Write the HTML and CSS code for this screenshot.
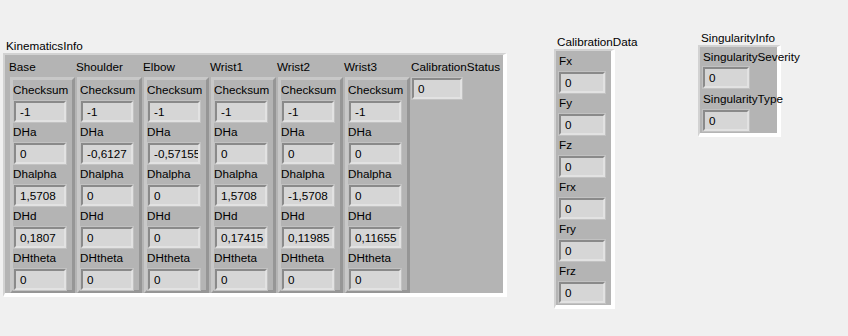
FILE: index.html
```html
<!DOCTYPE html>
<html lang="en">
<head>
    <meta charset="UTF-8">
    <title>Front Panel</title>
    <link rel="stylesheet" href="styles.css">
</head>
<body>
    <div class="panel">
        <!-- KinematicsInfo -->
        <div class="control kinematics">
            <div class="caption">KinematicsInfo</div>
            <div class="cluster outer">
                <div class="column">
                    <div class="col-label">Base</div>
                    <div class="cluster inner">
                        <div class="field"><div class="flabel">Checksum</div><div class="num">-1</div></div>
                        <div class="field"><div class="flabel">DHa</div><div class="num">0</div></div>
                        <div class="field"><div class="flabel">Dhalpha</div><div class="num">1,5708</div></div>
                        <div class="field"><div class="flabel">DHd</div><div class="num">0,1807</div></div>
                        <div class="field"><div class="flabel">DHtheta</div><div class="num">0</div></div>
                    </div>
                </div>
                <div class="column">
                    <div class="col-label">Shoulder</div>
                    <div class="cluster inner">
                        <div class="field"><div class="flabel">Checksum</div><div class="num">-1</div></div>
                        <div class="field"><div class="flabel">DHa</div><div class="num">-0,6127</div></div>
                        <div class="field"><div class="flabel">Dhalpha</div><div class="num">0</div></div>
                        <div class="field"><div class="flabel">DHd</div><div class="num">0</div></div>
                        <div class="field"><div class="flabel">DHtheta</div><div class="num">0</div></div>
                    </div>
                </div>
                <div class="column">
                    <div class="col-label">Elbow</div>
                    <div class="cluster inner">
                        <div class="field"><div class="flabel">Checksum</div><div class="num">-1</div></div>
                        <div class="field"><div class="flabel">DHa</div><div class="num">-0,57155</div></div>
                        <div class="field"><div class="flabel">Dhalpha</div><div class="num">0</div></div>
                        <div class="field"><div class="flabel">DHd</div><div class="num">0</div></div>
                        <div class="field"><div class="flabel">DHtheta</div><div class="num">0</div></div>
                    </div>
                </div>
                <div class="column">
                    <div class="col-label">Wrist1</div>
                    <div class="cluster inner">
                        <div class="field"><div class="flabel">Checksum</div><div class="num">-1</div></div>
                        <div class="field"><div class="flabel">DHa</div><div class="num">0</div></div>
                        <div class="field"><div class="flabel">Dhalpha</div><div class="num">1,5708</div></div>
                        <div class="field"><div class="flabel">DHd</div><div class="num">0,17415</div></div>
                        <div class="field"><div class="flabel">DHtheta</div><div class="num">0</div></div>
                    </div>
                </div>
                <div class="column">
                    <div class="col-label">Wrist2</div>
                    <div class="cluster inner">
                        <div class="field"><div class="flabel">Checksum</div><div class="num">-1</div></div>
                        <div class="field"><div class="flabel">DHa</div><div class="num">0</div></div>
                        <div class="field"><div class="flabel">Dhalpha</div><div class="num">-1,5708</div></div>
                        <div class="field"><div class="flabel">DHd</div><div class="num">0,11985</div></div>
                        <div class="field"><div class="flabel">DHtheta</div><div class="num">0</div></div>
                    </div>
                </div>
                <div class="column">
                    <div class="col-label">Wrist3</div>
                    <div class="cluster inner">
                        <div class="field"><div class="flabel">Checksum</div><div class="num">-1</div></div>
                        <div class="field"><div class="flabel">DHa</div><div class="num">0</div></div>
                        <div class="field"><div class="flabel">Dhalpha</div><div class="num">0</div></div>
                        <div class="field"><div class="flabel">DHd</div><div class="num">0,11655</div></div>
                        <div class="field"><div class="flabel">DHtheta</div><div class="num">0</div></div>
                    </div>
                </div>
                <div class="column status">
                    <div class="col-label">CalibrationStatus</div>
                    <div class="num">0</div>
                </div>
            </div>
        </div>

        <!-- CalibrationData -->
        <div class="control calibration">
            <div class="caption">CalibrationData</div>
            <div class="cluster side">
                <div class="field"><div class="flabel">Fx</div><div class="num">0</div></div>
                <div class="field"><div class="flabel">Fy</div><div class="num">0</div></div>
                <div class="field"><div class="flabel">Fz</div><div class="num">0</div></div>
                <div class="field"><div class="flabel">Frx</div><div class="num">0</div></div>
                <div class="field"><div class="flabel">Fry</div><div class="num">0</div></div>
                <div class="field"><div class="flabel">Frz</div><div class="num">0</div></div>
            </div>
        </div>

        <!-- SingularityInfo -->
        <div class="control singularity">
            <div class="caption">SingularityInfo</div>
            <div class="cluster side">
                <div class="field"><div class="flabel">SingularitySeverity</div><div class="num">0</div></div>
                <div class="field"><div class="flabel">SingularityType</div><div class="num">0</div></div>
            </div>
        </div>
    </div>
</body>
</html>
```

FILE: styles.css
```css
body {
    margin: 0;
    padding: 0;
    background-color: #f0f0f0;
    font-family: 'Liberation Sans', Arial, sans-serif;
    font-size: 11.7px;
    color: #000000;
}

.panel {
    position: relative;
    width: 848px;
    height: 336px;
    overflow: hidden;
}

/* controls sit on the front panel at their own place */
.control {
    position: absolute;
}

.kinematics {
    left: 3px;
    top: 38px;
}

.calibration {
    left: 554px;
    top: 34px;
}

.singularity {
    left: 698px;
    top: 30px;
}

.caption {
    height: 15px;
    line-height: 15px;
    padding-left: 3px;
    white-space: nowrap;
}

.cluster {
    background-color: #b4b4b4;
    border-style: solid;
}

.outer {
    display: flex;
    width: 493px;
    height: 236px;
    padding: 2px 0 0 5px;
    border-width: 2px 4px 4px 2px;
    border-color: #d2d2d2 #ffffff #ffffff #d2d2d2;
    gap: 2px;
}

.column {
    display: flex;
    flex-direction: column;
    width: 65px;
}

.col-label {
    height: 20px;
    line-height: 20px;
    margin-left: -1px;
    white-space: nowrap;
}

.inner {
    flex: 1;
    padding: 0;
    border-width: 3px;
    border-color: #c8c8c8 #969696 #969696 #c8c8c8;
}

.status {
    width: 85px;
}

.status .num {
    width: 50px;
    margin-left: 0;
    margin-top: 1px;
}

.side {
    padding: 0 1px 2px 2px;
    border-width: 2px 4px 4px 2px;
    border-color: #d2d2d2 #ffffff #ffffff #d2d2d2;
}

.side .flabel {
    padding-left: 1px;
}

.calibration .side {
    width: 52px;
}

.singularity .side {
    width: 74px;
}

.singularity .flabel {
    height: 20px;
}

.singularity .field + .field .flabel {
    height: 22px;
    line-height: 22px;
}

.field {
    display: flex;
    flex-direction: column;
}

.flabel {
    height: 21px;
    line-height: 20px;
    white-space: nowrap;
}

.num {
    box-sizing: border-box;
    width: 52px;
    height: 21px;
    line-height: 17px;
    margin-left: 1px;
    padding-left: 4px;
    background-color: #d6d6d6;
    border: 2px solid;
    border-color: #8a8a8a #e2e2e2 #e2e2e2 #8a8a8a;
    box-shadow: 0 0 0 1px #c2c2c2;
    overflow: hidden;
    white-space: nowrap;
}

.calibration .num,
.singularity .num {
    width: 46px;
}
```
